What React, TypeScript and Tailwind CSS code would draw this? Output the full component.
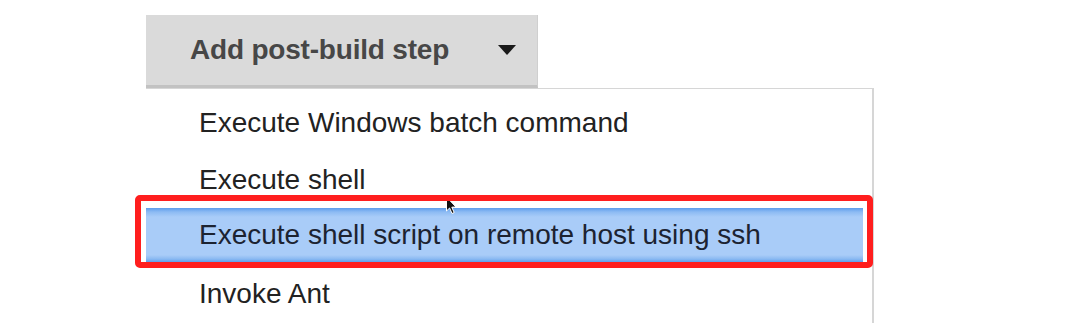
import React from "react";

const items = [
  { label: "Execute Windows batch command", cls: "h-[57px]" },
  { label: "Execute shell", cls: "h-[57px]" },
  { label: "Execute shell script on remote host using ssh", cls: "h-[54px]" },
  { label: "Invoke Ant", cls: "h-[63px]" },
];

function Cursor() {
  return (
    <svg width="12" height="19" viewBox="0 0 12 19" className="absolute left-[445px] top-[196px]">
      <path d="M1.5 1 L1.5 15 L4.6 12 L7 17.5 L9.2 16.5 L6.8 11.2 L11 11 Z" fill="#111" stroke="#fff" strokeWidth="1" />
    </svg>
  );
}

export default function App() {
  return (
    <div className="relative h-[323px] w-[1083px] overflow-hidden bg-white font-['Liberation_Sans',Arial,sans-serif]">
      <div className="pl-[146px] pt-[15px]">
        <div className="flex h-[73px] w-[392px] items-center border-b-[3px] border-r border-b-[#c2c2c2] border-r-[#cfcfcf] bg-[#dadada] pl-[44px] pr-[21px]">
          <span className="text-[28px] font-bold tracking-[-0.2px] text-[#474747]">Add post-build step</span>
          <svg width="18" height="10" viewBox="0 0 18 10" className="ml-auto">
            <path d="M0 0 L18 0 L9 10 Z" fill="#1a1a1a" />
          </svg>
        </div>
        <div className="w-[728px] border-r-2 border-t border-[#d6d6d6] pt-[5px]">
          {items.map((item, i) => (
            <div
              key={item.label}
              className={
                i === 2
                  ? `${item.cls} mr-[9px] flex items-center bg-[linear-gradient(to_bottom,#5e9deb,#8dbbf3_4px,#a9ccf8_9px,#a9ccf8_calc(100%-7px),#8ab9f2_calc(100%-3px),#5f9eeb)] pl-[53px] text-[28px] text-[#1c2331]`
                  : `${item.cls} flex items-center pl-[53px] text-[28px] text-[#222]`
              }
            >
              {item.label}
            </div>
          ))}
        </div>
      </div>
      <Cursor />
      <div className="absolute left-[135px] top-[195px] h-[73px] w-[738px] rounded-[5px] border-[6px] border-[#ff1e1e]" />
    </div>
  );
}
